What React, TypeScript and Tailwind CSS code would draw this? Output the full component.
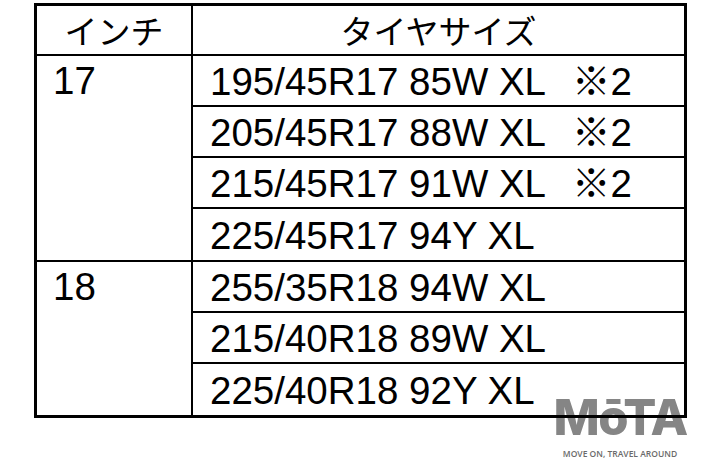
const sans = "font-['Liberation_Sans','Noto_Sans_CJK_JP',Arial,sans-serif]";

type Row = { size: string; note?: string };

const groups: { inch: string; rows: Row[] }[] = [
  {
    inch: '17',
    rows: [
      { size: '195/45R17 85W XL', note: '※2' },
      { size: '205/45R17 88W XL', note: '※2' },
      { size: '215/45R17 91W XL', note: '※2' },
      { size: '225/45R17 94Y XL' },
    ],
  },
  {
    inch: '18',
    rows: [
      { size: '255/35R18 94W XL' },
      { size: '215/40R18 89W XL' },
      { size: '225/40R18 92Y XL' },
    ],
  },
];

function SizeCell({ row, last }: { row: Row; last: boolean }) {
  return (
    <div
      className={`flex h-[51px] items-center pl-[17px] pt-[3px] text-[38.5px] leading-none ${
        last ? 'h-[50px]' : 'border-b-2 border-black'
      }`}
    >
      <span className="inline-block w-[362px] whitespace-nowrap">{row.size}</span>
      {row.note && <span className="whitespace-nowrap">{row.note}</span>}
    </div>
  );
}

export default function App() {
  return (
    <div className={`relative h-[474px] w-[710px] overflow-hidden bg-white text-black ${sans}`}>
      {/* watermark */}
      <div className="absolute left-[551px] top-[393px] flex w-[138px] flex-col items-center text-[#858585]">
        <div className="font-['Inter',sans-serif] text-[49px] font-extrabold leading-none tracking-[-1.5px]">
          MōTA
        </div>
        <div className="mt-[8px] font-['Open_Sans',sans-serif] text-[8.5px] font-semibold leading-none text-[#6a6a6a]">
          MOVE ON, TRAVEL AROUND
        </div>
      </div>

      {/* table */}
      <div className="relative z-10 ml-[34px] mt-[3px] w-[653px] border-[3px] border-black">
        <div className="flex h-[50px] border-b-2 border-black font-['Noto_Sans_CJK_JP',sans-serif] text-[33px] leading-none">
          <div className="flex w-[156px] items-center justify-center border-r-2 border-black">インチ</div>
          <div className="flex flex-1 items-center justify-center">タイヤサイズ</div>
        </div>
        {groups.map((g, gi) => (
          <div
            key={g.inch}
            className={`flex ${gi < groups.length - 1 ? 'border-b-2 border-black' : ''}`}
          >
            <div className="w-[156px] border-r-2 border-black pl-[16px] pt-[6px] text-[38.5px] leading-none">
              {g.inch}
            </div>
            <div className="flex flex-1 flex-col">
              {g.rows.map((r, i) => (
                <SizeCell key={r.size} row={r} last={i === g.rows.length - 1} />
              ))}
            </div>
          </div>
        ))}
      </div>
    </div>
  );
}
